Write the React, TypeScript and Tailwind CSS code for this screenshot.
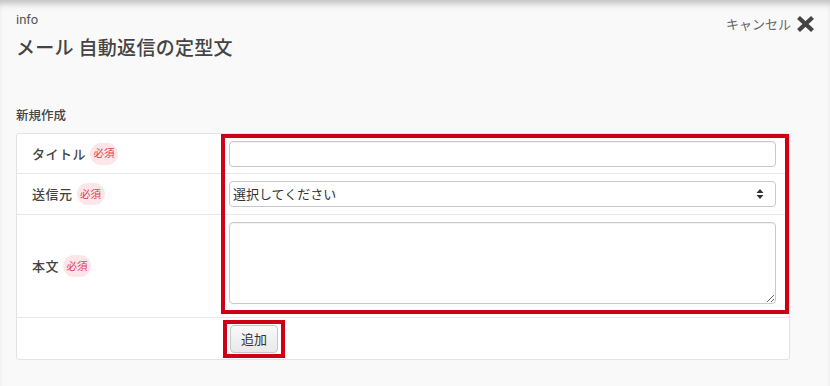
import React from "react";

const jp = "font-['Noto_Sans_CJK_JP','Noto_Sans',sans-serif]";

const Required: React.FC = () => (
  <span className="ml-[4px] inline-flex h-[22px] w-[28px] items-center justify-center rounded-full bg-[#fde6ea] text-[10.5px] leading-none text-[#e63a50]">
    必須
  </span>
);

const Label: React.FC<{ text: string }> = ({ text }) => (
  <div className="flex w-[206px] shrink-0 items-center pl-[15px]">
    <span className="text-[13px] font-medium tracking-[0.5px] text-[#444]">{text}</span>
    <Required />
  </div>
);

const CloseIcon = () => (
  <svg width="19" height="16" viewBox="0 0 19 16">
    <path d="M2.5 1.5 L16.5 14.5 M16.5 1.5 L2.5 14.5" stroke="#444" strokeWidth="4.2" />
  </svg>
);

const SortIcon = () => (
  <svg width="8" height="10" viewBox="0 0 8 10">
    <path d="M4 0 L7.5 4 L0.5 4 Z M4 10 L7.5 6 L0.5 6 Z" fill="#333" />
  </svg>
);

export default function App() {
  return (
    <div className={`min-h-[386px] w-full bg-[#f9f9f9] shadow-[inset_0_7px_6px_-3px_rgba(0,0,0,0.22)] ${jp}`}>
      {/* Header */}
      <div className="flex items-start justify-between pl-4 pr-[15px] pt-[12px]">
        <div>
          <p className="font-['Roboto',sans-serif] text-[13px] leading-[16px] text-[#555]">info</p>
          <h1 className="mt-[6px] text-[19px] font-medium leading-[26px] tracking-[0.3px] text-[#444]">
            メール 自動返信の定型文
          </h1>
        </div>
        <div className="flex items-center gap-[5px] pt-[4px]">
          <span className="text-[13px] leading-[16px] text-[#666]">キャンセル</span>
          <CloseIcon />
        </div>
      </div>

      {/* Form */}
      <div className="px-4">
        <p className="mt-[46px] text-[12.5px] font-medium leading-[18px] text-[#444]">新規作成</p>

        <div className="relative mt-[9px] w-[774px] rounded-[3px] border border-[#e3e3e3] bg-white">
          <div className="flex h-[40px] items-center border-b border-[#e8e8e8]">
            <Label text="タイトル" />
            <div className="flex-1 pl-[6px] pr-[13px]">
              <input
                type="text"
                className="h-[26px] w-full rounded-[4px] border border-[#c9c9c9] bg-white shadow-[inset_0_1px_1px_rgba(0,0,0,0.06)] outline-none"
              />
            </div>
          </div>

          <div className="flex h-[41px] items-center border-b border-[#e8e8e8]">
            <Label text="送信元" />
            <div className="flex-1 pl-[6px] pr-[13px]">
              <div className="flex h-[26px] w-full items-center justify-between rounded-[4px] border border-[#c9c9c9] bg-white pl-[3px] pr-[11px]">
                <span className="text-[13px] text-[#333]">選択してください</span>
                <SortIcon />
              </div>
            </div>
          </div>

          <div className="flex h-[103px] items-center border-b border-[#e8e8e8]">
            <Label text="本文" />
            <div className="flex-1 self-start pl-[6px] pr-[13px] pt-[7px]">
              <textarea className="block h-[82px] w-full rounded-[4px] border border-[#c9c9c9] bg-white shadow-[inset_0_1px_1px_rgba(0,0,0,0.06)] outline-none" />
            </div>
          </div>

          <div className="flex h-[41px] items-center">
            <div className="w-[206px] shrink-0" />
            <div className="pl-[7px]">
              <button className="h-[28px] w-[48px] rounded-[4px] border border-[#c5c5c5] bg-gradient-to-b from-[#f9f9f9] to-[#e9e9e9] text-[13px] text-[#333]">
                追加
              </button>
            </div>
          </div>

          {/* annotation boxes */}
          <div className="pointer-events-none absolute left-[204px] top-[0px] h-[180px] w-[568px] border-[4px] border-[#cf0016]" />
          <div className="pointer-events-none absolute left-[206px] top-[186px] h-[38px] w-[62px] border-[4px] border-[#cf0016]" />
        </div>
      </div>
    </div>
  );
}
